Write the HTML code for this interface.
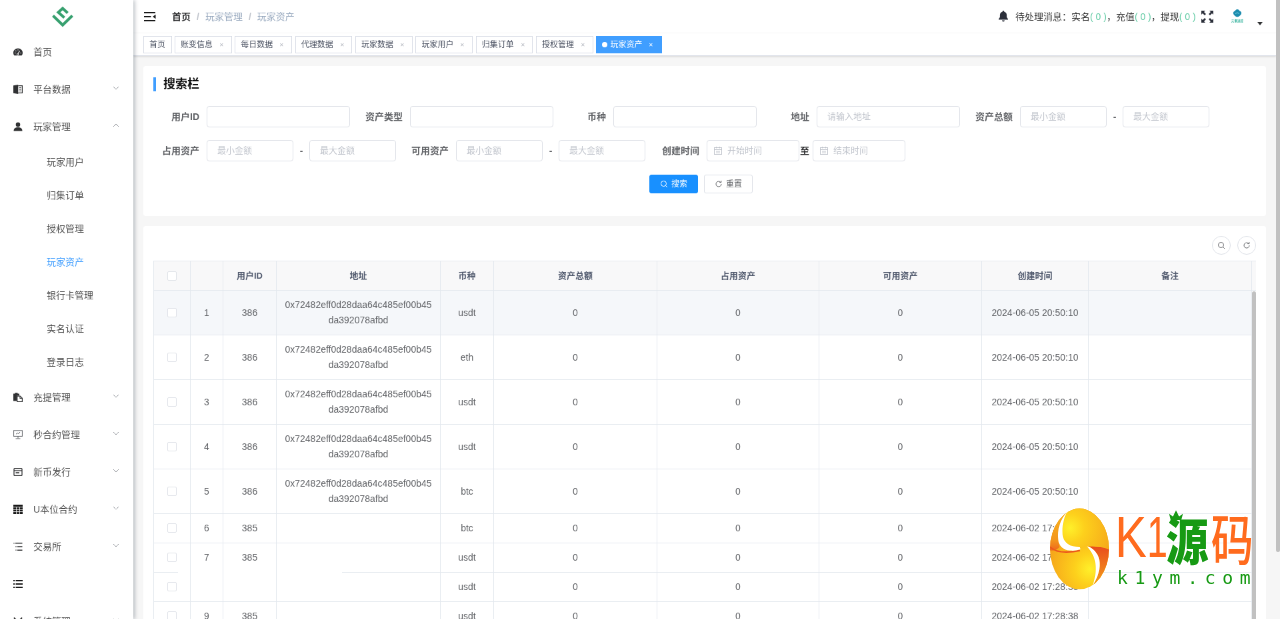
<!DOCTYPE html>
<html lang="zh-CN">
<head>
<meta charset="utf-8">
<title>玩家资产</title>
<style>
*{box-sizing:border-box;margin:0;padding:0}
html,body{width:1280px;height:619px;overflow:hidden;background:#f6f6f6}
body{font-family:"Liberation Sans","Noto Sans CJK SC",sans-serif;color:#606266;position:relative}
#app{position:absolute;left:0;top:0;width:1920px;height:929px;transform:scale(.6666667);transform-origin:0 0;overflow:hidden;will-change:transform;background:#f6f6f6;font-size:14px}
/* sidebar */
.sidebar{position:absolute;left:0;top:0;width:200px;height:929px;background:#fff;box-shadow:2px 0 6px rgba(0,21,41,.28);z-index:10}
.logo{height:50px;position:relative}
.logo svg{position:absolute;left:78px;top:9px;width:32px;height:32px}
.mi{height:56px;line-height:56px;padding-left:20px;color:rgba(0,0,0,.7);position:relative;font-size:14px;white-space:nowrap}
.mi svg.ic{width:14px;height:14px;vertical-align:-2px;margin-right:16px;fill:#303133}
.mi .arr{position:absolute;right:20px;top:20px;width:12px;height:12px}
.sub{height:50px;line-height:50px;padding-left:70px;color:rgba(0,0,0,.7);font-size:14px;white-space:nowrap}
.sub.act{color:#409eff}
/* navbar */
.navbar{position:absolute;left:200px;top:0;width:1714px;height:50px;background:#fff;box-shadow:0 1px 4px rgba(0,21,41,.08)}
.hamb{position:absolute;left:15px;top:15px;width:20px;height:20px}
.bc{position:absolute;left:58px;top:0;line-height:50px;font-size:14px;white-space:nowrap}
.bc b{color:#303133;font-weight:700}
.bc i{font-style:normal;color:#c0c4cc;margin:0 9px;font-weight:700}
.bc span{color:#97a8be}
.rmenu{position:absolute;right:0;top:0;height:50px}
.msg{position:absolute;left:1323px;top:0;line-height:50px;font-size:14px;color:#333;white-space:nowrap}
.msg em{font-style:normal;color:#5fcaa3}
/* tags */
.tags{position:absolute;left:200px;top:50px;width:1714px;height:34px;background:#fff;border-bottom:1px solid #d8dce5;box-shadow:0 1px 3px 0 rgba(0,0,0,.12),0 0 3px 0 rgba(0,0,0,.04)}
.tag{position:absolute;top:4px;height:26px;line-height:24px;border:1px solid #d8dce5;color:#495060;background:#fff;padding:0 8px;font-size:12px;white-space:nowrap}
.tag .x{display:inline-block;width:16px;text-align:center;margin-left:5px;font-size:10px;color:#b4b8c0;transform:scale(.75)}
.tag.on{background:#409eff;border-color:#409eff;color:#fff}
.tag.on .x{color:#fff}
.tag.on:before{content:"";display:inline-block;width:8px;height:8px;border-radius:50%;background:#fff;margin-right:4px;position:relative;top:0}
/* cards */
.card{position:absolute;left:215px;width:1684px;background:#fff;border-radius:4px}
.c1{top:99px;height:225px}
.c2{top:339px;height:700px}
.ttl{position:absolute;left:15px;top:17px;height:21px;border-left:4px solid #409eff;padding-left:11px;font-size:18px;line-height:21px;font-weight:700;color:#111}
.lbl{position:absolute;width:81px;height:32px;line-height:32px;text-align:right;padding-right:12px;font-weight:700;color:#606266;font-size:14px;white-space:nowrap}
.inp{position:absolute;height:32px;border:1px solid #dcdfe6;border-radius:4px;background:#fff;line-height:30px;padding:0 15px;font-size:13px;color:#c0c4cc;white-space:nowrap}
.inp.dt{padding-left:30px}
.inp.dt svg{position:absolute;left:10px;top:9px;width:12px;height:12px}
.dash{position:absolute;width:24px;text-align:center;line-height:32px;font-weight:700;color:#606266}
.btn{position:absolute;height:28px;border-radius:3px;font-size:12px;line-height:26px;padding:0 15px;border:1px solid #dcdfe6;background:#fff;color:#606266;white-space:nowrap}
.btn.pri{background:#1890ff;border-color:#1890ff;color:#fff}
.btn svg{width:12px;height:12px;vertical-align:-2px;margin-right:5px}
.circ{position:absolute;top:15px;width:28px;height:28px;border-radius:50%;border:1px solid #dcdfe6;background:#fff}
.circ svg{position:absolute;left:7px;top:7px;width:12px;height:12px}
/* table */
.tbl{position:absolute;left:15px;top:51.500px;width:1654px;border:1px solid #e3e8ee;border-right:none;height:700px;overflow:hidden}
table{border-collapse:separate;border-spacing:0;table-layout:fixed;width:1647px}
th,td{border-right:1px solid #e3e8ee;border-bottom:1px solid #e3e8ee;text-align:center;padding:10.500px 10px 9.500px;line-height:23px;font-size:14px;color:#606266;font-weight:400;word-break:break-all;vertical-align:middle}
th{background:#f8f8f9;color:#515a6e;font-weight:700;font-size:13px;height:44px}
tr.hov td{background:#f5f7fa}
.cb{display:inline-block;width:14px;height:14px;border:1px solid #dfe2e8;border-radius:2px;background:#fff;vertical-align:middle;position:relative;top:-1px}
.wp{position:absolute;top:466px;height:1px;background:#fff}
.gut{position:absolute;right:0;top:0;width:6px;height:44px;background:#f8f8f9;border-bottom:1px solid #e3e8ee}
.thumb{position:absolute;right:0;top:45px;width:6px;height:700px;background:#c1c1c1;border-radius:3px}
/* page scrollbar */
.psb{position:absolute;left:1914px;top:0;width:6px;height:929px;background:#f6f6f6}
.psb div{width:6px;height:828px;background:#c1c1c1;border-radius:0 0 3px 3px}
/* watermark */
#wm{position:absolute;left:0;top:0;width:1280px;height:619px;pointer-events:none;z-index:50}
</style>
</head>
<body>
<div id="app">
<div class="sidebar">
 <div class="logo">
  <svg viewBox="0 0 32 32"><g fill="none" stroke="#37a06f" stroke-width="4.200" stroke-linejoin="miter"><path d="M1.500 14.500 L16 28.500 L30.500 14.500"/><path d="M18.500 17.500 L9.500 9.500 L16 3.500 L23.500 10.500"/></g></svg>
 </div>
 <div class="mi"><svg class="ic" viewBox="0 0 14 14"><path d="M7 1.6C3.1 1.6 0 4.6 0 8.3c0 1.5.5 2.9 1.4 4h11.2c.9-1.100 1.400-2.500 1.400-4 0-3.700-3.100-6.700-7-6.700z"/><g stroke="#fff" stroke-width="1.1" fill="none"><path d="M6.600 10 L9.600 5.200"/><path d="M2 8.500h1.600M10.400 8.500H12M7 3.300v1.300M3.400 4.800l1 1"/></g><circle cx="6.500" cy="10.200" r="1.500" fill="#fff"/><circle cx="6.500" cy="10.200" r=".7"/></svg>首页</div>
 <div class="mi"><svg class="ic" viewBox="0 0 14 14"><path d="M0 1.200 L7.300 0 V14 L0 12.800z"/><path d="M7.300 1.600H13.400V12.400H7.300" fill="none" stroke="#303133" stroke-width="1.200"/><path d="M8.800 4.600h3M8.800 7h3M8.800 9.400h3" stroke="#303133" stroke-width="1"/></svg>平台数据<svg class="arr" viewBox="0 0 12 12"><path d="M2 4l4 4 4-4" fill="none" stroke="#909399" stroke-width="1"/></svg></div>
 <div class="mi"><svg class="ic" viewBox="0 0 14 14"><circle cx="7" cy="3.900" r="3.300"/><path d="M0.500 13.500c0-3.600 2.600-5.400 6.500-5.400s6.500 1.800 6.500 5.400z"/></svg>玩家管理<svg class="arr" viewBox="0 0 12 12"><path d="M2 8l4-4 4 4" fill="none" stroke="#909399" stroke-width="1"/></svg></div>
 <div class="sub">玩家用户</div>
 <div class="sub">归集订单</div>
 <div class="sub">授权管理</div>
 <div class="sub act">玩家资产</div>
 <div class="sub">银行卡管理</div>
 <div class="sub">实名认证</div>
 <div class="sub">登录日志</div>
 <div class="mi"><svg class="ic" viewBox="0 0 14 14"><path d="M0 1.500h2.500V.3h4v1.200H9v3H5.200v8H0z"/><path d="M5.800 5.100h4.400l3.200 3.200v5.200H5.800z" fill="#fff" stroke="#303133" stroke-width="1.200"/><path d="M10 5.200v3.300h3.300" fill="none" stroke="#303133" stroke-width="1.100"/></svg>充提管理<svg class="arr" viewBox="0 0 12 12"><path d="M2 4l4 4 4-4" fill="none" stroke="#909399" stroke-width="1"/></svg></div>
 <div class="mi"><svg class="ic" viewBox="0 0 14 14"><g fill="none" stroke="#606266" stroke-width="1"><rect x=".6" y=".8" width="12.800" height="8.600"/><path d="M7 9.400v3.200M3.500 13h7M4 6.200l2.200-1.700 1.500 1.200L10 3"/></g></svg>秒合约管理<svg class="arr" viewBox="0 0 12 12"><path d="M2 4l4 4 4-4" fill="none" stroke="#909399" stroke-width="1"/></svg></div>
 <div class="mi"><svg class="ic" viewBox="0 0 14 14"><g fill="none" stroke="#303133" stroke-width="1.300"><rect x="1" y="1.600" width="12" height="10.800" rx="1"/><path d="M1 5h12"/><path d="M3.500 8.200h5.500" stroke-width="1.800"/></g></svg>新币发行<svg class="arr" viewBox="0 0 12 12"><path d="M2 4l4 4 4-4" fill="none" stroke="#909399" stroke-width="1"/></svg></div>
 <div class="mi"><svg class="ic" viewBox="0 0 14 14"><rect width="14" height="14" fill="#1a1a1a"/><path d="M4.700 3.600v10.400M9.300 3.600v10.400M0 3.600h14M0 7.100h14M0 10.600h14" stroke="#fff" stroke-width=".9"/></svg>U本位合约<svg class="arr" viewBox="0 0 12 12"><path d="M2 4l4 4 4-4" fill="none" stroke="#909399" stroke-width="1"/></svg></div>
 <div class="mi"><svg class="ic" viewBox="0 0 14 14"><g stroke="#303133" stroke-width="1.500"><path d="M3 1.800h10.500M6 7h7.500M6 12.200h7.500"/><path d="M.3 1.800h1.400M3.300 7h1.400M3.300 12.200h1.400" stroke-width="1.300"/></g></svg>交易所<svg class="arr" viewBox="0 0 12 12"><path d="M2 4l4 4 4-4" fill="none" stroke="#909399" stroke-width="1"/></svg></div>
 <div class="mi"><svg class="ic" viewBox="0 0 14 14"><g stroke="#1a1a1a" stroke-width="2"><path d="M3.600 2h10.400M3.600 7h10.400M3.600 12h10.400"/><path d="M0 2h2.200M0 7h2.200M0 12h2.200"/></g></svg></div>
 <div class="mi"><svg class="ic" viewBox="0 0 14 14"><g fill="none" stroke="#1a1a1a" stroke-width="1.800"><path d="M1 1.500 L7 8 L13 1.500M7 8v6"/></g></svg>系统管理<svg class="arr" viewBox="0 0 12 12"><path d="M2 4l4 4 4-4" fill="none" stroke="#909399" stroke-width="1"/></svg></div>
</div>

<div class="navbar">
 <svg class="hamb" viewBox="0 0 20 20"><g fill="#1a1a1a"><rect x="1" y="3" width="17" height="2"/><rect x="1" y="9" width="10.500" height="2"/><rect x="1" y="15" width="17" height="2"/><path d="M18.500 6.800v6.400L14 10z"/></g></svg>
 <div class="bc"><b>首页</b><i>/</i><span>玩家管理</span><i>/</i><span>玩家资产</span></div>
 <svg style="position:absolute;left:1297px;top:16px;width:16px;height:17px" viewBox="0 0 16 17"><path fill="#2b2f3a" d="M8 0c.7 0 1.200.5 1.200 1.200v.4c2.300.5 3.900 2.500 3.900 4.900v3.300l1.900 2.700v.9H1v-.9l1.900-2.700V6.500c0-2.400 1.600-4.400 3.900-4.900v-.4C6.800.5 7.300 0 8 0zM6 14.400h4c0 1.100-.9 2-2 2s-2-.9-2-2z"/></svg>
 <div class="msg">待处理消息：实名<em>( 0 )</em>，充值<em>( 0 )</em>，提现<em>( 0 )</em></div>
 <svg style="position:absolute;left:1602px;top:16px;width:18px;height:18px" viewBox="0 0 18 18"><g fill="#2b2f3a"><path d="M0 0h6L4 2l3 3-2 2-3-3-2 2z"/><path d="M18 0v6l-2-2-3 3-2-2 3-3-2-2z"/><path d="M0 18v-6l2 2 3-3 2 2-3 3 2 2z"/><path d="M18 18h-6l2-2-3-3 2-2 3 3 2-2z"/></g></svg>
 <svg style="position:absolute;left:1644px;top:13px;width:24px;height:22px" viewBox="0 0 24 22"><path d="M12 1 C14 1 15 2.500 15.500 3.500 C17.500 4 18.500 5.500 18 7.500 C17.500 9.500 14 12.500 12 12.500 C10 12.500 6.500 9.500 6 7.500 C5.500 5.500 6.500 4 8.500 3.500 C9 2.500 10 1 12 1z" fill="#1c8cae"/><path d="M9 7.500 q3 -3 6 0" stroke="#7fd4e6" stroke-width="1" fill="none"/><text x="12" y="19.800" font-size="4.600" text-anchor="middle" fill="#3bb5a0" font-family="Liberation Sans, Noto Sans CJK SC, sans-serif" font-weight="700">元素追踪</text></svg>
 <svg style="position:absolute;left:1686px;top:33px;width:8px;height:5px" viewBox="0 0 8 5"><path d="M0 0h8L4 5z" fill="#303133"/></svg>
</div>

<div class="tags">
 <div class="tag" style="left:15px;width:43px">首页</div>
 <div class="tag" style="left:62.0px;width:85.500px">账变信息<span class="x">✕</span></div>
 <div class="tag" style="left:152.3px;width:85.500px">每日数据<span class="x">✕</span></div>
 <div class="tag" style="left:242.7px;width:85.500px">代理数据<span class="x">✕</span></div>
 <div class="tag" style="left:333.0px;width:85.500px">玩家数据<span class="x">✕</span></div>
 <div class="tag" style="left:423.4px;width:85.500px">玩家用户<span class="x">✕</span></div>
 <div class="tag" style="left:513.7px;width:85.500px">归集订单<span class="x">✕</span></div>
 <div class="tag" style="left:604.0px;width:85.500px">授权管理<span class="x">✕</span></div>
 <div class="tag on" style="left:694.4px;width:98.600px">玩家资产<span class="x">✕</span></div>
</div>

<div class="card c1">
 <div class="ttl">搜索栏</div>
 <div class="lbl" style="left:15px;top:60px">用户ID</div><div class="inp" style="left:95px;top:60px;width:215px"></div>
 <div class="lbl" style="left:320px;top:60px">资产类型</div><div class="inp" style="left:400px;top:60px;width:215px"></div>
 <div class="lbl" style="left:625px;top:60px">币种</div><div class="inp" style="left:705px;top:60px;width:215px"></div>
 <div class="lbl" style="left:930px;top:60px">地址</div><div class="inp" style="left:1010px;top:60px;width:215px">请输入地址</div>
 <div class="lbl" style="left:1235px;top:60px">资产总额</div><div class="inp" style="left:1315px;top:60px;width:130px">最小金额</div><div class="dash" style="left:1445px;top:60px">-</div><div class="inp" style="left:1469px;top:60px;width:130px">最大金额</div>

 <div class="lbl" style="left:15px;top:111px">占用资产</div><div class="inp" style="left:95px;top:111px;width:130px">最小金额</div><div class="dash" style="left:225px;top:111px">-</div><div class="inp" style="left:249px;top:111px;width:130px">最大金额</div>
 <div class="lbl" style="left:389px;top:111px">可用资产</div><div class="inp" style="left:469px;top:111px;width:130px">最小金额</div><div class="dash" style="left:599px;top:111px">-</div><div class="inp" style="left:623px;top:111px;width:130px">最大金额</div>
 <div class="lbl" style="left:765px;top:111px">创建时间</div>
 <div class="inp dt" style="left:845px;top:111px;width:139px"><svg viewBox="0 0 12 12"><g fill="none" stroke="#c0c4cc" stroke-width="1"><rect x=".5" y="1.500" width="11" height="10"/><path d="M.5 4.500h11M3.500 0v2.500M8.500 0v2.500M3 7h6M3 9.200h6"/></g></svg>开始时间</div>
 <div class="dash" style="left:982px;top:111px;width:20px;color:#303133">至</div>
 <div class="inp dt" style="left:1004px;top:111px;width:139px"><svg viewBox="0 0 12 12"><g fill="none" stroke="#c0c4cc" stroke-width="1"><rect x=".5" y="1.500" width="11" height="10"/><path d="M.5 4.500h11M3.500 0v2.500M8.500 0v2.500M3 7h6M3 9.200h6"/></g></svg>结束时间</div>

 <div class="btn pri" style="left:759px;top:163px;width:73px"><svg viewBox="0 0 12 12"><circle cx="5.500" cy="5.500" r="4" fill="none" stroke="#fff" stroke-width="1"/><path d="M8.500 8.500l2.500 2.500" stroke="#fff" stroke-width="1"/></svg>搜索</div>
 <div class="btn" style="left:841px;top:163px;width:73px"><svg viewBox="0 0 12 12"><path d="M10 6a4 4 0 1 1-1.200-2.800" fill="none" stroke="#606266" stroke-width="1"/><path d="M9.800 1v2.600H7.200" fill="none" stroke="#606266" stroke-width="1"/></svg>重置</div>
</div>

<div class="card c2">
 <div class="circ" style="left:1603px"><svg viewBox="0 0 12 12"><circle cx="5.500" cy="5.500" r="4" fill="none" stroke="#606266" stroke-width="1"/><path d="M8.500 8.500l2.500 2.500" stroke="#606266" stroke-width="1"/></svg></div>
 <div class="circ" style="left:1641px"><svg viewBox="0 0 12 12"><path d="M10 6a4 4 0 1 1-1.200-2.800" fill="none" stroke="#606266" stroke-width="1"/><path d="M9.800 1v2.600H7.200" fill="none" stroke="#606266" stroke-width="1"/></svg></div>
 <div class="tbl">
 <table>
 <colgroup><col style="width:55px"><col style="width:49px"><col style="width:80px"><col style="width:246px"><col style="width:80px"><col style="width:245px"><col style="width:243px"><col style="width:244px"><col style="width:160px"><col style="width:245px"></colgroup>
 <tr><th><span class="cb"></span></th><th></th><th>用户ID</th><th>地址</th><th>币种</th><th>资产总额</th><th>占用资产</th><th>可用资产</th><th>创建时间</th><th>备注</th></tr>
 <tr class="hov"><td><span class="cb"></span></td><td>1</td><td>386</td><td>0x72482eff0d28daa64c485ef00b45da392078afbd</td><td>usdt</td><td>0</td><td>0</td><td>0</td><td>2024-06-05 20:50:10</td><td></td></tr>
 <tr><td><span class="cb"></span></td><td>2</td><td>386</td><td>0x72482eff0d28daa64c485ef00b45da392078afbd</td><td>eth</td><td>0</td><td>0</td><td>0</td><td>2024-06-05 20:50:10</td><td></td></tr>
 <tr><td><span class="cb"></span></td><td>3</td><td>386</td><td>0x72482eff0d28daa64c485ef00b45da392078afbd</td><td>usdt</td><td>0</td><td>0</td><td>0</td><td>2024-06-05 20:50:10</td><td></td></tr>
 <tr><td><span class="cb"></span></td><td>4</td><td>386</td><td>0x72482eff0d28daa64c485ef00b45da392078afbd</td><td>usdt</td><td>0</td><td>0</td><td>0</td><td>2024-06-05 20:50:10</td><td></td></tr>
 <tr><td><span class="cb"></span></td><td>5</td><td>386</td><td>0x72482eff0d28daa64c485ef00b45da392078afbd</td><td>btc</td><td>0</td><td>0</td><td>0</td><td>2024-06-05 20:50:10</td><td></td></tr>
 <tr><td><span class="cb"></span></td><td>6</td><td>385</td><td></td><td>btc</td><td>0</td><td>0</td><td>0</td><td>2024-06-02 17:28:39</td><td></td></tr>
 <tr><td><span class="cb"></span></td><td>7</td><td>385</td><td></td><td>usdt</td><td>0</td><td>0</td><td>0</td><td>2024-06-02 17:28:39</td><td></td></tr>
 <tr><td><span class="cb"></span></td><td></td><td></td><td></td><td>usdt</td><td>0</td><td>0</td><td>0</td><td>2024-06-02 17:28:38</td><td></td></tr>
 <tr><td><span class="cb"></span></td><td>9</td><td>385</td><td></td><td>usdt</td><td>0</td><td>0</td><td>0</td><td>2024-06-02 17:28:38</td><td></td></tr>
 <tr><td><span class="cb"></span></td><td>10</td><td>385</td><td></td><td>eth</td><td>0</td><td>0</td><td>0</td><td>2024-06-02 17:28:38</td><td></td></tr>
 </table>
 <div class="wp" style="left:36px;width:18px"></div><div class="wp" style="left:55px;width:48px"></div><div class="wp" style="left:104px;width:79px"></div><div class="wp" style="left:184px;width:98px"></div>
 <div class="gut"></div><div class="thumb"></div>
 </div>
</div>

<div class="psb"><div></div></div>
</div>
<div id="wm">
 <svg style="position:absolute;left:1046px;top:504px" width="68" height="90" viewBox="0 0 68 90">
  <defs>
   <radialGradient id="g1" gradientUnits="userSpaceOnUse" cx="24" cy="24" r="42"><stop offset="0" stop-color="#fff02a"/><stop offset=".35" stop-color="#fdd01c"/><stop offset="1" stop-color="#f6ab1b"/></radialGradient>
   <radialGradient id="g2" gradientUnits="userSpaceOnUse" cx="44" cy="65" r="44"><stop offset="0" stop-color="#fff02a"/><stop offset=".35" stop-color="#fdd01c"/><stop offset="1" stop-color="#f5a21b"/></radialGradient>
   <linearGradient id="g3" x1="0" y1="0" x2="0" y2="1"><stop offset="0" stop-color="#e84a1d"/><stop offset=".4" stop-color="#ee6d1d"/><stop offset="1" stop-color="#f4a01d"/></linearGradient>
   <linearGradient id="g4" x1="0" y1="0" x2="0" y2="1"><stop offset="0" stop-color="#f9b81d"/><stop offset=".75" stop-color="#f3961d"/><stop offset="1" stop-color="#ee6a1d"/></linearGradient>
   <clipPath id="ec"><ellipse cx="33.500" cy="44.900" rx="29.500" ry="40.300"/></clipPath>
  </defs>
  <g clip-path="url(#ec)">
  <rect width="68" height="90" fill="url(#g2)"/>
  <path d="M23 5 C12 14 3 30 3 46 C7 47 11 46 13.500 43 C10.500 33 11.500 18 23 5z" fill="url(#g4)"/>
  <path d="M4 43 C9 47.500 18 50 34 46.500" fill="none" stroke="#ec5a1e" stroke-width="1.600"/>
  <path d="M38 41 L66 44 L66 62 C62 72 56 79 46.500 82 C54 70 55 60 52.500 53 C50 47 46 43.500 38 41z" fill="url(#g3)"/>
  <path d="M22 7 C14 15 11 26 12.300 36 C13 42 17 46 24 46.600 C28 47 31 46.500 34.500 45.300 L30 30z" fill="#fff"/>
  <path d="M40 41.500 C46 43.500 50 47 52.500 53 C55 60 54 70 46.500 82 C50 72 50.500 64 49 57 C47.500 51 45 46.500 40 41.500z" fill="#fff"/>
  <path d="M22 6 C17 14 15.500 26 17 33 C18.500 39 24 43 33.700 43 C42 43 52 40.500 64 46 L68 46 L68 0 L22 0z" fill="url(#g1)"/>
  </g>
 </svg>
 <div id="wk" style="position:absolute;left:1115px;top:508px;font:400 58px/58px 'Liberation Sans',sans-serif;color:#ff6b1e;white-space:nowrap;transform:scaleX(.82);transform-origin:0 0">K</div>
 <div id="w1" style="position:absolute;left:1147px;top:508px;font:400 58px/58px 'Liberation Sans',sans-serif;color:#ff6b1e;white-space:nowrap;transform:scaleX(.64);transform-origin:0 0">1</div>
 <div id="wy" style="position:absolute;left:1166px;top:503px;font:900 50px/70px 'Noto Sans CJK SC',sans-serif;color:#179a14;white-space:nowrap;transform:scaleX(.85);transform-origin:0 0">源</div>
 <div id="wm2" style="position:absolute;left:1211px;top:503px;font:500 50px/70px 'Noto Sans CJK SC',sans-serif;color:#ff6b1e;white-space:nowrap;transform:scale(.85,1.1);transform-origin:0 84%">码</div>
 <svg style="position:absolute;left:1169px;top:510px" width="14" height="11" viewBox="0 0 16 12"><path d="M2 11 L0 4 L4.500 7 L8 0 L11.500 7 L16 4 L14 11z" fill="#179a14"/></svg>
 <div id="wu" style="position:absolute;left:1117px;top:566px;font:400 18px/24px 'DejaVu Sans Mono','Liberation Mono',monospace;color:#179a14;letter-spacing:6.700px;white-space:nowrap">k1ym.com</div>
</div>
</body>
</html>
